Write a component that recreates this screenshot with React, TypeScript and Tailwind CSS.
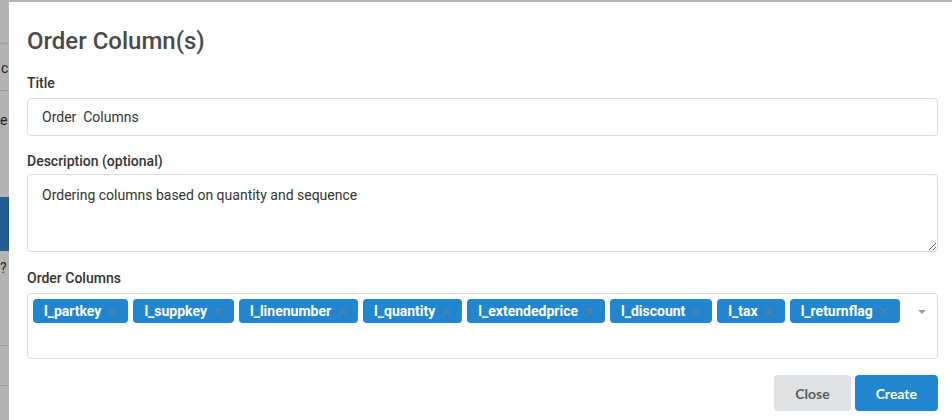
const columns = [
  'l_partkey',
  'l_suppkey',
  'l_linenumber',
  'l_quantity',
  'l_extendedprice',
  'l_discount',
  'l_tax',
  'l_returnflag',
]

function ColumnChip({ name }: { name: string }) {
  return (
    <span className="flex h-[24px] items-center rounded-[4px] bg-[#2185d0] pl-[11px] pr-[11px] text-[14px] font-bold text-white">
      <span className="leading-none">{name}</span>
      <svg className="ml-[7px]" width="9" height="9" viewBox="0 0 9 9">
        <path d="M1.5 1.5 L7.5 7.5 M7.5 1.5 L1.5 7.5" stroke="rgba(130,130,130,0.45)" strokeWidth="2.2" strokeLinecap="round" />
      </svg>
    </span>
  )
}

function Field({ label, children }: { label: string; children: React.ReactNode }) {
  return (
    <div className="flex flex-col">
      <label className="mb-[5px] text-[14px] font-medium leading-[20px] text-[#333]">{label}</label>
      {children}
    </div>
  )
}

// dimmed page peeking out behind the modal
function Backdrop() {
  return (
    <div className="flex w-[9px] shrink-0 flex-col bg-[#b3b3b3] pt-[43px] text-[14px] leading-none text-[#222]">
      <div className="h-px bg-[#9a9a9a]" />
      <div className="h-[46px] pt-[17px] pl-[1px]">c</div>
      <div className="h-px bg-[#9a9a9a]" />
      <div className="h-[106px] pt-[22px]">e</div>
      <div className="h-[54px] bg-[#1e5f8f]" />
      <div className="h-[94px] pt-[10px]">?</div>
      <div className="h-px bg-[#9a9a9a]" />
      <div className="h-[39px]" />
      <div className="h-px bg-[#9a9a9a]" />
    </div>
  )
}

export default function App() {
  return (
    <div
      className="flex h-[420px] w-[952px] overflow-hidden bg-[#b3b3b3]"
      style={{ fontFamily: 'Roboto, "Noto Sans", sans-serif' }}
    >
      <Backdrop />
      <div className="mt-[2px] flex flex-1 flex-col bg-white pl-[18px] pr-[14px] pt-[25px]">
        <h1 className="mb-[18px] text-[24px] font-medium leading-[28px] text-[#4a4a4a]">Order Column(s)</h1>

        <Field label="Title">
          <input
            readOnly
            value="Order  Columns"
            className="h-[38px] w-full rounded-[4px] border border-[#dcdcdc] px-[14px] text-[14px] whitespace-pre text-[#333] outline-none"
          />
        </Field>

        <div className="mt-[15px]">
          <Field label="Description (optional)">
            <textarea
              readOnly
              defaultValue="Ordering columns based on quantity and sequence"
              className="-mt-[2px] h-[78px] w-full resize-y rounded-[4px] border border-[#dcdcdc] px-[14px] py-[10px] text-[14px] leading-[20px] text-[#333] outline-none"
            />
          </Field>
        </div>

        <div className="mt-[16px]">
          <Field label="Order Columns">
            <div className="flex h-[66px] w-full items-start rounded-[4px] border border-[#dcdcdc] pl-[5px] pr-[14px] pt-[5px]">
              <div className="flex flex-1 flex-wrap gap-[5px]">
                {columns.map((c) => (
                  <ColumnChip key={c} name={c} />
                ))}
              </div>
              <svg className="mt-[11px] mr-[-3px]" width="8" height="4" viewBox="0 0 8 4">
                <path d="M0 0 L8 0 L4 4 Z" fill="#9a9a9a" />
              </svg>
            </div>
          </Field>
        </div>

        <div
          className="mt-[16px] flex justify-end gap-[4px]"
          style={{ fontFamily: 'Lato, "Noto Sans", sans-serif' }}
        >
          <button className="h-[36px] rounded-[4px] bg-[#e0e1e2] px-[21px] text-[14px] font-bold text-[#5a5a5a]">
            Close
          </button>
          <button className="h-[36px] rounded-[4px] bg-[#2185d0] px-[21px] text-[14px] font-bold text-white">
            Create
          </button>
        </div>
      </div>
    </div>
  )
}
